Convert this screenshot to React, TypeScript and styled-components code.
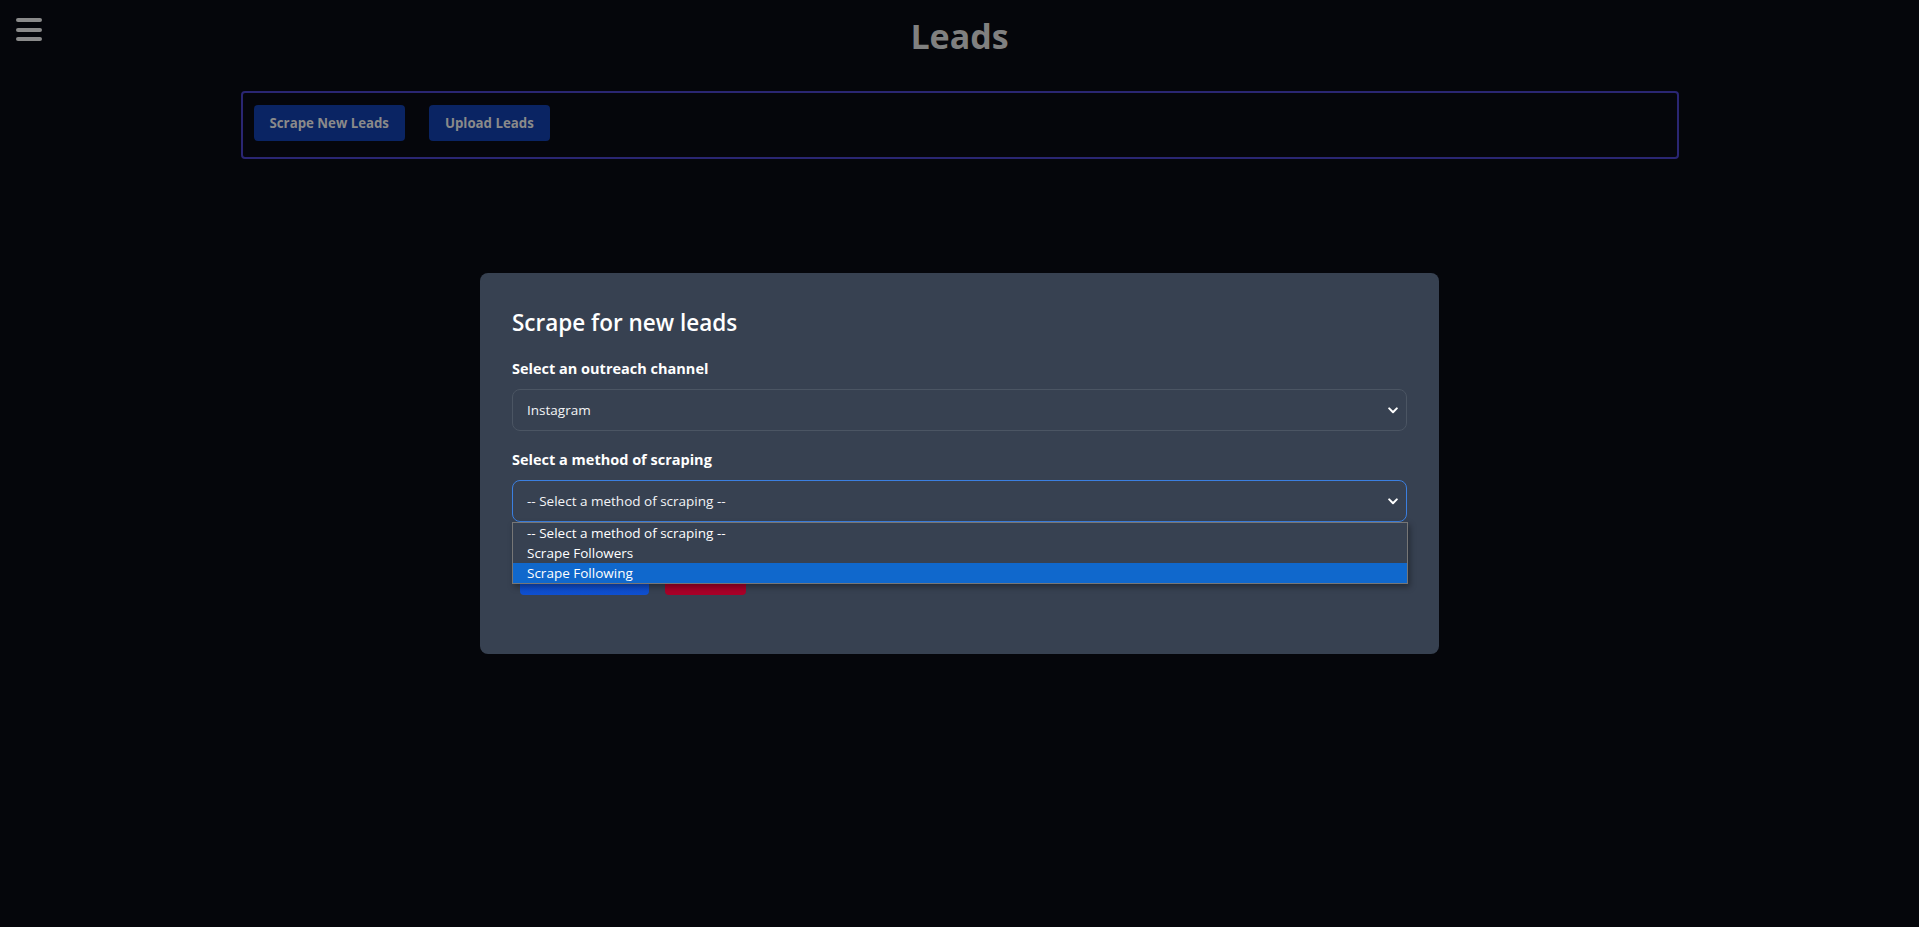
import React from "react";
import styled, { createGlobalStyle } from "styled-components";

const GlobalStyle = createGlobalStyle`
  html, body {
    margin: 0;
    padding: 0;
    background: #05060b;
    font-family: "Open Sans", "Noto Sans", sans-serif;
    color: #ffffff;
  }
  * { box-sizing: border-box; }
`;

const Page = styled.div`
  min-height: 927px;
  background: #05060b;
`;

const Header = styled.header`
  display: grid;
  grid-template-columns: 80px 1fr 80px;
  align-items: start;
  height: 91px;
`;

const MenuButton = styled.button`
  display: flex;
  flex-direction: column;
  gap: 5.5px;
  margin: 18px 0 0 16px;
  padding: 0;
  border: none;
  background: transparent;
  cursor: pointer;
  width: 26px;
`;

const MenuBar = styled.span`
  display: block;
  width: 26px;
  height: 4px;
  border-radius: 2px;
  background: #8a8a8a;
`;

const Title = styled.h1`
  margin: 15px 0 0;
  text-align: center;
  font-size: 34px;
  line-height: 42px;
  font-weight: 700;
  color: #808080;
`;

const Toolbar = styled.div`
  width: 1438px;
  margin: 0 auto;
  display: flex;
  gap: 24px;
  padding: 12px 11px 16px;
  border: 2px solid #2a2672;
  border-radius: 4px;
`;

const ToolbarButton = styled.button`
  height: 36px;
  padding: 0 16px;
  border: none;
  border-radius: 4px;
  background: #0a2463;
  color: #8a8a8a;
  font-family: "Open Sans", "Noto Sans", sans-serif;
  font-size: 13.25px;
  font-weight: 700;
  cursor: pointer;
`;

const Overlay = styled.div`
  position: fixed;
  inset: 0;
  display: flex;
  align-items: center;
  justify-content: center;
`;

const Card = styled.div`
  position: relative;
  width: 959px;
  padding: 32px;
  background: #374151;
  border-radius: 8px;
`;

const CardTitle = styled.h2`
  margin: 0 0 18px;
  padding-top: 2px;
  font-size: 22.5px;
  line-height: 32px;
  font-weight: 600;
  color: #ffffff;
`;

const Field = styled.div`
  display: flex;
  flex-direction: column;
  gap: 8px;
  margin-bottom: 17px;
`;

const Label = styled.label`
  font-size: 14.5px;
  line-height: 24px;
  font-weight: 700;
  color: #ffffff;
`;

const SelectBox = styled.div<{ $focused?: boolean }>`
  position: relative;
  display: flex;
  align-items: center;
  justify-content: space-between;
  height: 42px;
  padding: 0 8px 0 14px;
  border: 1px solid ${(p) => (p.$focused ? "#3b7fe0" : "#4b5563")};
  border-radius: 8px;
  background: #374151;
  font-size: 13.5px;
  color: #f3f4f6;
`;

const Chevron = () => (
  <svg width="10" height="7" viewBox="0 0 10 7" aria-hidden="true">
    <path d="M1.2 1.4 L5 5.2 L8.8 1.4" fill="none" stroke="#ffffff" strokeWidth="2" strokeLinecap="round" strokeLinejoin="round" />
  </svg>
);

const OptionList = styled.ul`
  position: absolute;
  top: calc(100% + 1px);
  left: -1px;
  width: 896px;
  margin: 0;
  padding: 0;
  list-style: none;
  background: #374151;
  border: 1px solid #767676;
  box-shadow: 2px 3px 6px rgba(0, 0, 0, 0.35);
  z-index: 5;
`;

const OptionItem = styled.li<{ $active?: boolean }>`
  height: 20px;
  line-height: 20px;
  padding-left: 14px;
  font-size: 13.5px;
  color: #ffffff;
  background: ${(p) => (p.$active ? "#1068cc" : "transparent")};
`;

const ButtonRow = styled.div`
  display: flex;
  gap: 16px;
  padding: 16px 8px 8px;
  margin-bottom: 19px;
`;

const ActionButton = styled.button<{ $variant: "primary" | "danger" }>`
  width: ${(p) => (p.$variant === "primary" ? "129px" : "81px")};
  height: 40px;
  padding: 0;
  border: none;
  border-radius: 4px;
  background: ${(p) =>
    p.$variant === "primary"
      ? "linear-gradient(#0c47c4, #0f4fcf)"
      : "#a80028"};
`;

export default function App() {
  const options = [
    "-- Select a method of scraping --",
    "Scrape Followers",
    "Scrape Following",
  ];
  return (
    <Page>
      <GlobalStyle />
      <Header>
        <MenuButton aria-label="Menu">
          <MenuBar />
          <MenuBar />
          <MenuBar />
        </MenuButton>
        <Title>Leads</Title>
        <div />
      </Header>
      <Toolbar>
        <ToolbarButton>Scrape New Leads</ToolbarButton>
        <ToolbarButton>Upload Leads</ToolbarButton>
      </Toolbar>
      <Overlay>
        <Card>
          <CardTitle>Scrape for new leads</CardTitle>
          <Field>
            <Label>Select an outreach channel</Label>
            <SelectBox>
              <span>Instagram</span>
              <Chevron />
            </SelectBox>
          </Field>
          <Field>
            <Label>Select a method of scraping</Label>
            <SelectBox $focused>
              <span>-- Select a method of scraping --</span>
              <Chevron />
              <OptionList>
                {options.map((o, i) => (
                  <OptionItem key={o} $active={i === 2}>
                    {o}
                  </OptionItem>
                ))}
              </OptionList>
            </SelectBox>
          </Field>
          <ButtonRow>
            <ActionButton $variant="primary" aria-label="Start scraping" />
            <ActionButton $variant="danger" aria-label="Cancel" />
          </ButtonRow>
        </Card>
      </Overlay>
    </Page>
  );
}
